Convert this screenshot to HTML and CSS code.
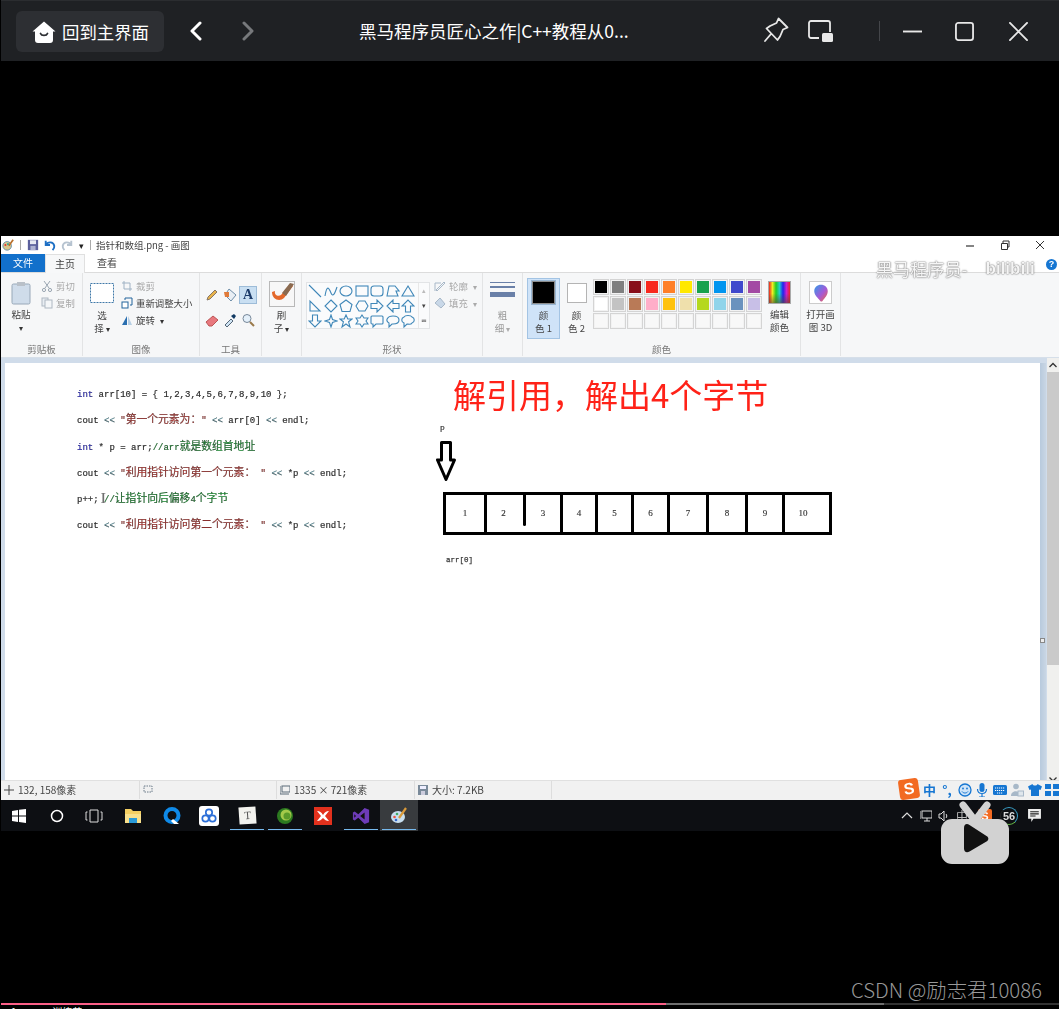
FILE: index.html
```html
<!DOCTYPE html>
<html lang="zh-CN">
<head>
<meta charset="utf-8">
<title>黑马程序员匠心之作|C++教程从0到1</title>
<link rel="stylesheet" href="styles.css">
</head>
<body>
<div class="player">
  <header class="topbar">
    <div class="top-left">
      <button class="home-btn">
        <svg class="ico-home" viewBox="0 0 24 24"><path d="M12 1.500 23.500 11.500H21V20a3 3 0 0 1-3 3H6a3 3 0 0 1-3-3v-8.500H.5z" fill="#fff"/><path d="M8.500 13.500c1 2.600 6 2.600 7 0" fill="none" stroke="#2d2f33" stroke-width="1.800" stroke-linecap="round"/></svg>
        <span>回到主界面</span>
      </button>
      <svg class="ico-chev" viewBox="0 0 14 20"><path d="M11 2 3 10l8 8" fill="none" stroke="#fff" stroke-width="3" stroke-linecap="round" stroke-linejoin="round"/></svg>
      <svg class="ico-chev dim" viewBox="0 0 14 20"><path d="m3 2 8 8-8 8" fill="none" stroke="#77797c" stroke-width="3" stroke-linecap="round" stroke-linejoin="round"/></svg>
    </div>
    <div class="video-title">黑马程序员匠心之作|C++教程从0...</div>
    <div class="top-right">
      <svg class="ico-pin" viewBox="0 0 26 26"><path d="M15.500 1.500 24.500 10.500 20 12.500 17 19.500 14.500 23 3.500 11.500 7 9 13.500 6zM8 17l-6 7" fill="none" stroke="#e8e8e8" stroke-width="1.800" stroke-linejoin="round" stroke-linecap="round"/></svg>
      <svg class="ico-mini" viewBox="0 0 25 22"><path d="M11 18H3a2 2 0 0 1-2-2V3a2 2 0 0 1 2-2h17a2 2 0 0 1 2 2v9" fill="none" stroke="#e8e8e8" stroke-width="1.800"/><rect x="14" y="13" width="11" height="9" rx="1.500" fill="#e8e8e8"/></svg>
      <i class="top-sep"></i>
      <svg class="ico-win" viewBox="0 0 20 20"><path d="M0 10h20" stroke="#e8e8e8" stroke-width="2"/></svg>
      <svg class="ico-win" viewBox="0 0 20 20"><rect x="1" y="1" width="18" height="18" rx="2.500" fill="none" stroke="#e8e8e8" stroke-width="1.900"/></svg>
      <svg class="ico-win" viewBox="0 0 20 20"><path d="m1 1 18 18M19 1 1 19" stroke="#e8e8e8" stroke-width="2" stroke-linecap="round"/></svg>
    </div>
  </header>

  <main class="stage">
    <section class="screen">
      <div class="qat">
        <svg class="q-ico" viewBox="0 0 14 14"><circle cx="6" cy="8" r="5" fill="#d9c58a" stroke="#5a8bb0"/><circle cx="4" cy="7" r="1.200" fill="#d33"/><circle cx="7" cy="6" r="1.200" fill="#3a9"/><path d="m8 8 5-7" stroke="#b86f2a" stroke-width="2"/></svg>
        <i class="q-sep"></i>
        <svg class="q-ico" viewBox="0 0 14 14"><rect x="1" y="1" width="12" height="12" fill="#5b5f9c"/><rect x="3.500" y="1.500" width="7" height="4.500" fill="#e6e8f2"/><rect x="4" y="8" width="6" height="5" fill="#aeb2d2"/></svg>
        <svg class="q-ico" viewBox="0 0 14 14"><path d="M2 2v5h5M2.500 7C4 3 11 2.500 12 8c.3 2-.5 3.500-2 5" fill="none" stroke="#1d6fc4" stroke-width="2.200"/></svg>
        <svg class="q-ico" viewBox="0 0 14 14"><path d="M12 2v5H7M11.500 7C10 3 3 2.500 2 8c-.3 2 .5 3.500 2 5" fill="none" stroke="#b6c3d0" stroke-width="2.200"/></svg>
        <span class="q-drop">▾</span>
        <i class="q-sep"></i>
        <span class="q-title">指针和数组.png - 画图</span>
        <div class="w-ctrl">
          <svg class="w-ico" viewBox="0 0 10 10"><path d="M1 6h8" stroke="#333" stroke-width="1.200"/></svg>
          <svg class="w-ico" viewBox="0 0 10 10"><path d="M1.500 3.500h6v6h-6zM3 3.500V1h6v6H7.500" fill="none" stroke="#333"/></svg>
          <svg class="w-ico" viewBox="0 0 10 10"><path d="m1 1 8 8M9 1 1 9" stroke="#333"/></svg>
        </div>
      </div>

      <nav class="tabs">
        <span class="tab file">文件</span>
        <span class="tab active">主页</span>
        <span class="tab">查看</span>
      </nav>

      <div class="ribbon">
        <div class="group g-clip">
          <div class="g-body">
            <div class="big-col paste">
              <svg class="big-ico" viewBox="0 0 20 24"><rect x="1" y="3" width="18" height="20" rx="1.500" fill="#cfdcea" stroke="#98a8b8"/><rect x="6" y="1" width="8" height="4" fill="#b9c0c8"/></svg>
              <span>粘贴</span>
              <span class="caret">▾</span>
            </div>
            <div class="small-col">
              <div class="s-row off"><svg class="s-ico" viewBox="0 0 12 12"><path d="m3 1 5 7M9 1 4 8" stroke="#9aa6b2"/><circle cx="3" cy="10" r="1.600" fill="none" stroke="#9aa6b2"/><circle cx="9" cy="10" r="1.600" fill="none" stroke="#9aa6b2"/></svg>剪切</div>
              <div class="s-row off"><svg class="s-ico" viewBox="0 0 12 12"><rect x="1" y="1" width="6" height="8" fill="#e8edf2" stroke="#aeb8c2"/><rect x="4" y="3" width="7" height="8" fill="#f4f6f8" stroke="#aeb8c2"/></svg>复制</div>
            </div>
          </div>
          <div class="g-label">剪贴板</div>
        </div>

        <div class="group g-image">
          <div class="g-body">
            <div class="big-col select">
              <svg class="sel-ico" viewBox="0 0 24 20"><rect x=".5" y=".5" width="23" height="19" fill="#fff" stroke="#3f78a8" stroke-dasharray="2 1"/></svg>
              <span class="t-gap">选</span>
              <span>择 <b class="caret">▾</b></span>
            </div>
            <div class="small-col">
              <div class="s-row off"><svg class="s-ico" viewBox="0 0 12 12"><path d="M3 1v8h8M1 3h8v8" fill="none" stroke="#9fb2c4"/></svg>裁剪</div>
              <div class="s-row"><svg class="s-ico" viewBox="0 0 12 12"><rect x="1" y="5" width="6" height="6" fill="#fff" stroke="#23649c"/><path d="M4 3V1h7v7H9" fill="none" stroke="#23649c"/></svg>重新调整大小</div>
              <div class="s-row"><svg class="s-ico" viewBox="0 0 12 12"><path d="M6 2v9H1z" fill="#2a6fb0"/><path d="M7 2v9h4z" fill="#b7cfe4"/></svg>旋转 <b class="caret">▾</b></div>
            </div>
          </div>
          <div class="g-label">图像</div>
        </div>

        <div class="group g-tools">
          <div class="g-body">
            <div class="tool-grid">
              <span class="tool"><svg viewBox="0 0 14 14"><path d="m2 12 1-3 7-7 2 2-7 7z" fill="#e8b34a" stroke="#876"/></svg></span>
              <span class="tool"><svg viewBox="0 0 14 14"><path d="m6 1 7 6-5 6-6-6z" fill="#e8eef4" stroke="#6f8ea8"/><path d="M1 4h5v5H2z" fill="#e07a3a"/></svg></span>
              <span class="tool on"><span class="letter-a">A</span></span>
              <span class="tool"><svg viewBox="0 0 14 14"><path d="m1 9 7-6 5 4-6 6H4z" fill="#e8787e" stroke="#b55"/></svg></span>
              <span class="tool"><svg viewBox="0 0 14 14"><path d="m2 12 6-6 2 2-6 6z" fill="#cfe4f4" stroke="#567"/><path d="m8 3 3-2 2 2-2 3z" fill="#123a63"/></svg></span>
              <span class="tool"><svg viewBox="0 0 14 14"><circle cx="6" cy="5.500" r="4" fill="#e4f0fa" stroke="#789"/><path d="m9 9 4 4" stroke="#9a7a4a" stroke-width="2"/></svg></span>
            </div>
          </div>
          <div class="g-label">工具</div>
        </div>

        <div class="group g-brush">
          <div class="g-body">
            <div class="big-col brush">
              <svg class="big-ico b2" viewBox="0 0 26 26"><rect x=".5" y=".5" width="25" height="25" fill="#f7f7f7" stroke="#b8b8b8"/><path d="M3 11c0 8 8 10 12 6l9-12-3-2-9 11c-3 2-7 0-6-4z" fill="#e4682a"/><path d="m17 15 8-12-4-1-8 10z" fill="#8a6a50"/></svg>
              <span>刷</span>
              <span>子 <b class="caret">▾</b></span>
            </div>
          </div>
        </div>

        <div class="group g-shapes">
          <div class="g-body">
            <div class="gallery">
              <div class="shape-grid">
                <svg viewBox="0 0 14 14"><path d="m1 1 12 12"/></svg>
                <svg viewBox="0 0 14 14"><path d="M1 12c2-12 4-8 6-3s4 0 6-6"/></svg>
                <svg viewBox="0 0 14 14"><ellipse cx="7" cy="7" rx="6" ry="5"/></svg>
                <svg viewBox="0 0 14 14"><rect x="1" y="2" width="12" height="10"/></svg>
                <svg viewBox="0 0 14 14"><rect x="1" y="2" width="12" height="10" rx="3"/></svg>
                <svg viewBox="0 0 14 14"><path d="M1 12 3 2h6l4 5h-3l2 5z"/></svg>
                <svg viewBox="0 0 14 14"><path d="M7 2 13 12H1z"/></svg>
                <svg viewBox="0 0 14 14"><path d="M2 2v10h10z"/></svg>
                <svg viewBox="0 0 14 14"><path d="m7 1 6 6-6 6-6-6z"/></svg>
                <svg viewBox="0 0 14 14"><path d="m7 1 6 4.500-2 7H3l-2-7z"/></svg>
                <svg viewBox="0 0 14 14"><path d="M4 2h6l3 5-3 5H4L1 7z"/></svg>
                <svg viewBox="0 0 14 14"><path d="M1 4.500h6V1l6 6-6 6V9.500H1z"/></svg>
                <svg viewBox="0 0 14 14"><path d="M13 4.500H7V1L1 7l6 6V9.500h6z"/></svg>
                <svg viewBox="0 0 14 14"><path d="M4.500 13V7H1l6-6 6 6H9.500v6z"/></svg>
                <svg viewBox="0 0 14 14"><path d="M4.500 1v6H1l6 6 6-6H9.500V1z"/></svg>
                <svg viewBox="0 0 14 14"><path d="m7 1 1.500 4.500L13 7 8.500 8.500 7 13 5.500 8.500 1 7l4.500-1.500z"/></svg>
                <svg viewBox="0 0 14 14"><path d="m7 1 1.800 4H13l-3.400 2.800L11 13 7 10 3 13l1.400-5.200L1 5h4.200z"/></svg>
                <svg viewBox="0 0 14 14"><path d="M7 1 9 4h4l-2 3 2 3H9l-2 3-2-3H1l2-3-2-3h4z"/></svg>
                <svg viewBox="0 0 14 14"><path d="M2 2h10a1 1 0 0 1 1 1v6a1 1 0 0 1-1 1H6l-3 3v-3H2a1 1 0 0 1-1-1V3a1 1 0 0 1 1-1z"/></svg>
                <svg viewBox="0 0 14 14"><path d="M7 2c8 0 8 8 0 8H6l-3 3v-4C-1 7 1 2 7 2z"/></svg>
                <svg viewBox="0 0 14 14"><path d="M3 3c1-2 7-2 8 0 3 1 3 5 0 6-1 2-4 1-5 1l-3 3v-4C0 8 0 4 3 3z"/></svg>
              </div>
              <div class="gal-scroll"><span>▴</span><span class="dark">▾</span><span class="dark">≂</span></div>
            </div>
            <div class="small-col tight">
              <div class="s-row off"><svg class="s-ico" viewBox="0 0 12 12"><path d="M1 11V3h6M2 10l8-8 1 1-8 8z" fill="none" stroke="#a8b8c8"/></svg>轮廓 <b class="caret pale">▾</b></div>
              <div class="s-row off"><svg class="s-ico" viewBox="0 0 12 12"><path d="m6 1 5 6-4 4-6-5z" fill="#c9d8e8" stroke="#a8b8c8"/></svg>填充 <b class="caret pale">▾</b></div>
            </div>
          </div>
          <div class="g-label">形状</div>
        </div>

        <div class="group g-size">
          <div class="g-body">
            <div class="big-col off">
              <div class="lines"><i class="l1"></i><i class="l2"></i><i class="l3"></i></div>
              <span>粗</span>
              <span>细 <b class="caret pale">▾</b></span>
            </div>
          </div>
        </div>

        <div class="group g-colors">
          <div class="g-body">
            <div class="color-btn on">
              <i class="c-box black"></i>
              <span>颜</span>
              <span>色 1</span>
            </div>
            <div class="color-btn">
              <i class="c-box white"></i>
              <span>颜</span>
              <span>色 2</span>
            </div>
            <div class="palette">
              <i class="sw c01"></i><i class="sw c02"></i><i class="sw c03"></i><i class="sw c04"></i><i class="sw c05"></i><i class="sw c06"></i><i class="sw c07"></i><i class="sw c08"></i><i class="sw c09"></i><i class="sw c10"></i>
              <i class="sw c11"></i><i class="sw c12"></i><i class="sw c13"></i><i class="sw c14"></i><i class="sw c15"></i><i class="sw c16"></i><i class="sw c17"></i><i class="sw c18"></i><i class="sw c19"></i><i class="sw c20"></i>
              <i class="sw"></i><i class="sw"></i><i class="sw"></i><i class="sw"></i><i class="sw"></i><i class="sw"></i><i class="sw"></i><i class="sw"></i><i class="sw"></i><i class="sw"></i>
            </div>
            <div class="big-col edit">
              <i class="rainbow"></i>
              <span>编辑</span>
              <span>颜色</span>
            </div>
          </div>
          <div class="g-label">颜色</div>
        </div>

        <div class="group g-3d">
          <div class="g-body">
            <div class="big-col p3d">
              <span class="p3d-box"><svg viewBox="0 0 20 24"><defs><linearGradient id="p3" x1="0" y1="0" x2="1" y2="1"><stop offset="0" stop-color="#2f9be8"/><stop offset=".55" stop-color="#a55ad8"/><stop offset="1" stop-color="#f4683a"/></linearGradient></defs><path d="M10 1c5 0 9 3.500 9 8.500 0 5-4 9-7 13-1 1-2 1-3 0C6 18.500 1 14.500 1 9.500 1 4.500 5 1 10 1z" fill="url(#p3)"/></svg></span>
              <span>打开画</span>
              <span>图 3D</span>
            </div>
          </div>
        </div>

        <div class="mark">
          <span class="mark-zh">黑马程序员-</span>
          <span class="mark-bili">bilibili</span>
        </div>
        <span class="help">?</span>
      </div>

      <div class="work">
        <div class="page">
          <div class="code">
            <p class="ln"><span class="kw">int</span> arr[10] = { 1,2,3,4,5,6,7,8,9,10 };</p>
            <p class="ln">cout <span class="op">&lt;&lt;</span> <span class="str">"<span class="zh">第一个元素为：</span>"</span> <span class="op">&lt;&lt;</span> arr[0] <span class="op">&lt;&lt;</span> endl;</p>
            <p class="ln"><span class="kw">int</span> * p = arr;<span class="cm">//arr<span class="zh">就是数组首地址</span></span></p>
            <p class="ln">cout <span class="op">&lt;&lt;</span> <span class="str">"<span class="zh">利用指针访问第一个元素：</span> "</span> <span class="op">&lt;&lt;</span> *p <span class="op">&lt;&lt;</span> endl;</p>
            <p class="ln">p++;<span class="ibeam">I</span> <span class="cm">//<span class="zh">让指针向后偏移</span>4<span class="zh">个字节</span></span></p>
            <p class="ln">cout <span class="op">&lt;&lt;</span> <span class="str">"<span class="zh">利用指针访问第二个元素：</span> "</span> <span class="op">&lt;&lt;</span> *p <span class="op">&lt;&lt;</span> endl;</p>
          </div>
          <div class="diagram">
            <h1 class="headline">解引用，解出4个字节</h1>
            <div class="p-label">p</div>
            <svg class="arrow" viewBox="0 0 20 40"><path d="M5.500 1.500h9V19h4L10 38.500 1.500 19h4z" fill="#fff" stroke="#000" stroke-width="3" stroke-linejoin="round"/></svg>
            <div class="array">
              <span class="cell">1</span><span class="cell short">2</span><span class="cell">3</span><span class="cell">4</span><span class="cell">5</span><span class="cell">6</span><span class="cell">7</span><span class="cell">8</span><span class="cell">9</span><span class="cell last">10</span>
            </div>
            <div class="arr-label">arr[0]</div>
          </div>
        </div>
        <i class="page-gutter"><b class="grip"></b></i>
        <div class="vscroll">
          <svg class="sb-arrow" viewBox="0 0 10 14"><path d="m1.500 9 3.500-3.500L8.500 9" fill="none" stroke="#333" stroke-width="1.300"/></svg>
          <div class="sb-track"><i class="sb-thumb"></i></div>
          <svg class="sb-arrow" viewBox="0 0 10 14"><path d="m1.500 5.500 3.500 3.500 3.500-3.500" fill="none" stroke="#333" stroke-width="1.300"/></svg>
        </div>
      </div>

      <footer class="status">
        <span class="st st1"><svg class="st-ico" viewBox="0 0 10 10"><path d="M5 0v10M0 5h10" stroke="#444"/></svg>132, 158像素</span>
        <span class="st st2"><svg class="st-ico" viewBox="0 0 10 10"><rect x="1" y="1" width="8" height="6" fill="none" stroke="#6a7a88" stroke-dasharray="1.500 1"/></svg></span>
        <span class="st st3"><svg class="st-ico" viewBox="0 0 10 10"><rect x="2" y="1" width="8" height="6" fill="none" stroke="#5a6a78"/><path d="M0 1v8h9" fill="none" stroke="#5a6a78"/></svg>1335 × 721像素</span>
        <span class="st st4"><svg class="st-ico" viewBox="0 0 10 10"><rect x="0" y="0" width="10" height="10" fill="#7a8a9a"/><rect x="2" y="1" width="6" height="3" fill="#eef"/><rect x="3" y="6" width="4" height="4" fill="#ccd"/></svg>大小: 7.2KB</span>
        <div class="ime">
          <span class="ime-s">S</span>
          <span class="ime-t">中</span>
          <span class="ime-t">°,</span>
          <svg class="ime-i" viewBox="0 0 14 14"><circle cx="7" cy="7" r="6" fill="#cfe4f8" stroke="#1676d2" stroke-width="1.300"/><circle cx="5" cy="5.500" r=".9" fill="#1676d2"/><circle cx="9" cy="5.500" r=".9" fill="#1676d2"/><path d="M4 8.500c1.500 2 4.500 2 6 0" fill="none" stroke="#1676d2"/></svg>
          <svg class="ime-i" viewBox="0 0 14 14"><rect x="4.500" y="0" width="5" height="9" rx="2.500" fill="#1676d2"/><path d="M2.500 6c0 6 9 6 9 0M7 11v3M4 14h6" fill="none" stroke="#1676d2" stroke-width="1.200"/></svg>
          <svg class="ime-i" viewBox="0 0 14 14"><rect x="0" y="2" width="14" height="10" rx="1.500" fill="#1676d2"/><path d="M2 5h10M2 7.500h10M4 10h6" stroke="#fff" stroke-dasharray="1.200 .8"/></svg>
          <svg class="ime-i" viewBox="0 0 14 14"><circle cx="6" cy="3.500" r="2.800" fill="#a8b8c8"/><path d="M1 13c0-6 9-6 9-1v1z" fill="#a8b8c8"/><rect x="8" y="8" width="5.500" height="5" fill="#dfe6ec" stroke="#a8b8c8"/></svg>
          <svg class="ime-i" viewBox="0 0 14 14"><path d="M4.500 1 0 3.500 1.500 7 3 6.500V13h8V6.500l1.500.5L14 3.500 9.500 1C9 3 5 3 4.500 1z" fill="#1676d2"/></svg>
          <svg class="ime-i" viewBox="0 0 14 14"><path d="M0 1h6v5H0zM8 1h6v5H8zM0 8h6v5H0zM8 8h6v5H8z" fill="#1676d2"/></svg>
        </div>
      </footer>

      <div class="taskbar">
        <svg class="tk tk-win" viewBox="0 0 14 14"><path d="M0 2 6 1v5.500H0zM7 .8 14 0v6.500H7zM0 7.500h6V13l-6-1zM7 7.500h7V14l-7-1z" fill="#fff"/></svg>
        <svg class="tk tk-cortana" viewBox="0 0 14 14"><circle cx="7" cy="7" r="5.500" fill="none" stroke="#fff" stroke-width="1.500"/></svg>
        <svg class="tk tk-view" viewBox="0 0 18 14"><path d="M5 1h8v12H5zM2.500 3H1v8h1.500M15.500 3H17v8h-1.500" fill="none" stroke="#ddd"/></svg>
        <svg class="tk tk-app" viewBox="0 0 18 16"><path d="M1 1h6l2 2h8v12H1z" fill="#f4cf62"/><rect x="1" y="6" width="16" height="9" fill="#f8e08c"/><rect x="5" y="10" width="8" height="5" fill="#2a9ad8"/></svg>
        <svg class="tk tk-app" viewBox="0 0 18 18"><circle cx="9" cy="8.500" r="6.500" fill="none" stroke="#0f8ae8" stroke-width="4"/><path d="m10 12 6 5h-5l-3-3z" fill="#fff"/></svg>
        <svg class="tk tk-app tall" viewBox="0 0 20 20"><rect width="20" height="20" rx="3" fill="#fff"/><g fill="none" stroke="#2c6fd8" stroke-width="1.700"><circle cx="6.500" cy="12.500" r="3.200"/><circle cx="13.500" cy="12.500" r="3.200"/><circle cx="10" cy="6.500" r="3.200"/></g></svg>
        <span class="tk-cell run"><span class="tk-t">T</span></span>
        <span class="tk-cell run"><svg class="tk-in" viewBox="0 0 18 18"><circle cx="9" cy="9" r="8" fill="#2c7a20"/><circle cx="10" cy="8" r="5.500" fill="#a4c94a"/><circle cx="11" cy="9" r="3.500" fill="#5b9a2a"/></svg></span>
        <span class="tk-cell"><svg class="tk-in" viewBox="0 0 18 18"><rect width="18" height="18" fill="#e2311d"/><path d="M3 4c3 0 4 1 6 4 2-3 3-4 6-4l-4 5 4 5c-3 0-4-1-6-3-2 2-3 3-6 3l4-5z" fill="#fff"/></svg></span>
        <span class="tk-cell run"><svg class="tk-in" viewBox="0 0 20 20"><path d="M14 1 19 3v14l-5 2-7-7-4 3-2-1V6l2-1 4 3z" fill="#6d3bb8"/><path d="M14 6v8l-5-4zM2.500 8v4l2-2z" fill="#121212"/></svg></span>
        <span class="tk-cell run cur"><svg class="tk-in" viewBox="0 0 18 18"><ellipse cx="8" cy="10" rx="7" ry="6" fill="#c8dff0"/><circle cx="4.500" cy="10" r="1.300" fill="#e54"/><circle cx="7" cy="7" r="1.300" fill="#4a6"/><circle cx="6" cy="13" r="1.300" fill="#36c"/><path d="m9 11 7-10" stroke="#d99a3a" stroke-width="2.200"/></svg></span>
        <div class="tray">
          <svg class="tr t-caret" viewBox="0 0 12 12"><path d="m1 8 5-5 5 5" fill="none" stroke="#ddd" stroke-width="1.200"/></svg>
          <svg class="tr t-mon" viewBox="0 0 12 12"><rect x="2" y="1" width="10" height="7" fill="none" stroke="#ddd"/><path d="M7 8v3M4 11h6M0 1v8" stroke="#ddd"/></svg>
          <svg class="tr t-vol" viewBox="0 0 12 12"><path d="M1 4h2l3-3v10L3 8H1z" fill="none" stroke="#ddd"/><path d="M8 4c1 1 1 3 0 4" fill="none" stroke="#ddd"/></svg>
          <span class="tr-t">中</span>
          <span class="tr-s">S</span>
          <span class="tr-ring">56</span>
          <svg class="tr notif" viewBox="0 0 14 14"><path d="M1 1h12v9H6l-2 3v-3H1z" fill="#eee"/><path d="M3 3.500h8M3 5.500h8M3 7.500h5" stroke="#222"/></svg>
        </div>
      </div>
    </section>

    <svg class="tv-play" viewBox="0 0 72 66"><path d="m24 5 10 13M48 5 38 18" stroke="#d2d2d2" stroke-width="7" stroke-linecap="round" fill="none"/><rect x="2" y="19" width="68" height="45" rx="11" fill="#d2d2d2"/><path d="M25 28c0-3.500 2.500-5 5.500-3l17 11c2.500 1.500 2.500 4 0 5.500l-17 10c-3 1.800-5.500.3-5.500-3z" fill="#111"/></svg>
    <div class="csdn">CSDN @励志君10086</div>
    <div class="progress"><i class="p-play"></i><i class="p-buf"></i><i class="p-rest"></i></div>
    <div class="next-line"><span>1.</span><span>训练营</span></div>
  </main>
</div>
</body>
</html>
```
FILE: styles.css
```css
* { box-sizing: border-box; }
html, body { margin: 0; padding: 0; background: #000; }
body { width: 1059px; height: 1009px; overflow: hidden; font-family: "Noto Sans CJK SC", "Noto Sans", sans-serif; }
svg { display: block; flex: none; }
i { display: block; font-style: normal; }
p, h1 { margin: 0; }

.player { height: 1009px; display: flex; flex-direction: column; border-left: 1px solid #000; }

/* top bar */
.topbar { height: 61px; flex: none; background: #1f2124; border-top: 1px solid #2b2d30; display: flex; align-items: center; position: relative; }
.top-left { display: flex; align-items: center; padding-left: 15px; width: 358px; }
.home-btn { width: 148px; height: 41px; margin-top: 1px; border: 0; border-radius: 6px; background: #2d2f33; color: #fff; font: 17.400px/41px "Noto Sans CJK SC", sans-serif; display: flex; align-items: center; padding: 0 0 0 16px; gap: 6px; }
.ico-home { width: 24px; height: 24px; }
.ico-chev { width: 14px; height: 20px; margin-left: 25px; }
.ico-chev.dim { margin-left: 38px; }
.video-title { width: 371px; color: #fff; font-size: 17.500px; line-height: 24px; white-space: nowrap; }
.top-right { display: flex; align-items: center; height: 100%; }
.ico-pin { width: 26px; height: 26px; margin-left: 33px; margin-top: -2px; }
.ico-mini { width: 25px; height: 22px; margin-left: 19px; }
.top-sep { width: 1px; height: 20px; background: #44464a; margin-left: 46px; }
.ico-win { width: 19px; height: 19px; margin-left: 23px; }
.ico-win + .ico-win { margin-left: 33px; }
.ico-win + .ico-win + .ico-win { margin-left: 35px; }

/* stage */
.stage { flex: 1; position: relative; padding-top: 175px; background: #000; }

/* paint window */
.screen { height: 595px; display: flex; flex-direction: column; color: #444; font-size: 9.500px; filter: blur(.5px); background: #fff; }
.qat { height: 18px; display: flex; align-items: center; background: #fff; flex: none; }
.q-ico { width: 12px; height: 12px; margin-left: 5px; }
.q-ico:first-child { margin-left: 1px; }
.q-sep { width: 1px; height: 10px; background: #aaa; margin-left: 6px; margin-right: 1px; }
.q-drop { margin-left: 6px; font-size: 9px; color: #222; }
.q-title { margin-left: 4px; color: #444; font-size: 9.500px; }
.w-ctrl { margin-left: auto; display: flex; gap: 25px; padding-right: 14px; }
.w-ico { width: 10px; height: 10px; }

.tabs { height: 18px; display: flex; flex: none; background: #fff; }
.tab { width: 40px; text-align: center; line-height: 18px; color: #444; font-size: 10px; }
.tab.file { width: 44px; background: #1270cb; color: #fff; }
.tab.active { border: 1px solid #e0e0e0; border-bottom: 0; height: 19px; background: #f7f8f9; position: relative; z-index: 1; }
.tab + .tab + .tab { margin-left: 2px; }

.ribbon { height: 85px; flex: none; display: flex; background: #f6f7f8; border-top: 1px solid #dcdcdc; position: relative; }
.group { border-right: 1px solid #e3e4e5; display: flex; flex-direction: column; margin-bottom: 1px; }
.g-body { height: 70px; display: flex; padding-top: 8px; }
.g-label { text-align: center; color: #777; line-height: 14px; }
.g-clip { width: 82px; }
.g-image { width: 117px; }
.g-tools { width: 62px; }
.g-brush { width: 40px; }
.g-shapes { width: 181px; }
.g-size { width: 40px; }
.g-colors { width: 278px; }
.g-3d { width: 40px; }

.big-col { display: flex; flex-direction: column; align-items: center; line-height: 13px; }
.big-col.off { color: #999; width: 100%; }
.big-ico { width: 20px; height: 24px; margin-bottom: 3px; }
.big-ico.b2 { width: 26px; height: 26px; margin-bottom: 2px; }
.paste { width: 40px; }
.caret { font-weight: 400; font-size: 8px; color: #333; }
.caret.pale { color: #aaa; }
.small-col { display: flex; flex-direction: column; gap: 1px; margin-top: -3px; font-size: 9.400px; }
.small-col.tight { margin-left: 4px; }
.s-row { display: flex; align-items: center; gap: 3px; height: 16px; white-space: pre; color: #444; }
.s-row.off { color: #a8a8a8; }
.s-ico { width: 12px; height: 12px; }

.select { width: 38px; }
.sel-ico { width: 24px; height: 20px; margin: 2px 0 6px; }
.t-gap { display: block; }

.tool-grid { display: grid; grid-template-columns: repeat(3, 18px); grid-auto-rows: 25px; padding: 5px 0 0 3px; }
.tool { width: 18px; height: 18px; padding: 2px; display: block; }
.tool svg { width: 14px; height: 14px; }
.tool.on { background: #c9dff2; border: 1px solid #9dbcd8; padding: 0; text-align: center; }
.letter-a { font: 700 14px/16px "Liberation Serif", serif; color: #1d3c6a; display: block; }
.brush { width: 100%; }

.gallery { width: 124px; height: 47px; margin: 1px 0 0 4px; border: 1px solid #e2e4e6; background: #fafbfc; display: flex; }
.shape-grid { width: 111px; display: grid; grid-template-columns: repeat(7, 15.500px); grid-auto-rows: 15px; }
.shape-grid svg { width: 14px; height: 14px; fill: none; stroke: #3f87b8; stroke-width: 1.100; margin: .5px 1px; }
.gal-scroll { flex: 1; border-left: 1px solid #e8e8e8; display: flex; flex-direction: column; align-items: center; font-size: 7px; line-height: 15px; color: #bbb; }
.gal-scroll .dark { color: #444; }

.lines { width: 25px; height: 21px; margin: 1px 0 6px; display: flex; flex-direction: column; gap: 3px; }
.lines .l1 { height: 1px; background: #6a80a8; }
.lines .l2 { height: 2px; background: #6a80a8; }
.lines .l3 { height: 5px; margin-top: 1px; background: #6a80a8; }

.color-btn { width: 33px; height: 61px; margin: -3px 0 0 4px; padding-top: 3px; display: flex; flex-direction: column; align-items: center; line-height: 13px; color: #444; }
.color-btn.on { width: 33px; background: #cfe3f8; border: 1px solid #a3c4e4; padding-top: 2px; }
.color-btn + .color-btn { margin-left: 0; }
.c-box { width: 23px; height: 23px; border: 1px solid #8c8c8c; margin-bottom: 5px; }
.c-box.black { background: #000; outline: 1px solid #99b6d2; }
.c-box.white { width: 20px; height: 20px; background: #fff; margin: 2px 0 6px; border-color: #b4b4b4; }

.palette { width: 171px; display: grid; grid-template-columns: repeat(10, 17px); grid-auto-rows: 17px; margin-top: -2px; height: 51px; }
.sw { width: 16px; height: 16px; border: 1px solid #d4d4d4; background: #f8f8f8; box-shadow: inset 0 0 0 1px #f2f2f2; }
.c01 { background: #000; } .c02 { background: #7f7f7f; } .c03 { background: #880f1a; } .c04 { background: #f8281e; } .c05 { background: #ff7f27; }
.c06 { background: #ffe800; } .c07 { background: #17a14c; } .c08 { background: #0095ef; } .c09 { background: #3f48cc; } .c10 { background: #a349a4; }
.c11 { background: #fff; } .c12 { background: #c3c3c3; } .c13 { background: #b97a57; } .c14 { background: #ffaec9; } .c15 { background: #ffc20e; }
.c16 { background: #efe0ac; } .c17 { background: #b5d81d; } .c18 { background: #90d4ea; } .c19 { background: #6a92be; } .c20 { background: #c8bfe7; }

.edit { width: 31px; }
.rainbow { width: 23px; height: 23px; border: 1px solid #aaa; margin-bottom: 4px; background: linear-gradient(to bottom, rgba(255,255,255,0) 55%, rgba(90,70,50,.6)), linear-gradient(to right, #e22, #ee2, #2c2, #2cc, #22e, #c2c, #e22); }
.p3d { width: 100%; white-space: nowrap; }
.p3d-box { width: 23px; height: 23px; border: 1px solid #ccc; background: #fff; margin-bottom: 4px; padding: 2px 3px; display: block; }
.p3d-box svg { width: 16px; height: 18px; }

.mark { position: absolute; top: -13px; left: 875px; display: flex; align-items: center; gap: 18px; height: 18px; color: rgba(255,255,255,.92); text-shadow: 0 0 1.500px #777, 0 0 1.500px #777; }
.mark-zh { font-size: 17px; line-height: 18px; white-space: nowrap; letter-spacing: .1px; }
.mark-bili { font: 700 17px/18px "Liberation Sans", sans-serif; }
.help { position: absolute; top: -14px; right: 2px; width: 11px; height: 11px; border-radius: 50%; background: #1676d2; color: #fff; font: 700 9px/11px "Liberation Sans", sans-serif; text-align: center; }

/* canvas */
.work { height: 423px; flex: none; display: flex; background: #d0dcea; padding-top: 5px; border-top: 1px solid #d6dfe9; }
.page { width: 1036px; margin-left: 4px; background: #fff; display: flex; font-size: 9px; color: #333; height: 100%; }
.code { width: 431px; padding: 19px 0 0 72px; font-family: "Liberation Mono", monospace; font-size: 9px; }
.ln { height: 26.300px; line-height: 26px; white-space: pre; position: relative; color: #2a2a2a; -webkit-text-stroke: .2px #333; }
.zh { font-family: "Noto Sans CJK SC", sans-serif; font-size: 10.800px; line-height: 0; }
.kw { color: #2a2ad0; }
.op { color: #5f9dab; }
.str { color: #a8302c; }
.cm { color: #16812c; }
.ibeam { position: absolute; left: 24px; top: -1px; font: 14px/26px "Liberation Serif", serif; color: #777; }

.diagram { display: flex; flex-direction: column; align-items: flex-start; }
.headline { font-size: 33px; font-weight: 400; line-height: 36px; color: #ff2218; margin: 13px 0 0 17px; white-space: nowrap; }
.p-label { font: 8px/10px "Liberation Mono", monospace; margin: 11px 0 0 4px; height: 10px; -webkit-text-stroke: .2px #333; }
.arrow { width: 20px; height: 40px; margin-top: 8px; }
.array { width: 389px; height: 43px; margin: 11px 0 0 7px; border: 3.500px solid #000; display: grid; grid-template-columns: 41px 39px 37px 35px 36px 36px 39px 39px 37px 1fr; background: #fff; }
.cell { border-right: 3px solid #000; font: 9px/36px "Liberation Serif", serif; color: #333; text-align: center; position: relative; -webkit-text-stroke: .15px #333; }
.cell.short { border-right: 0; padding-right: 6px; }
.cell.short::after { content: ""; position: absolute; right: 0; top: 0; width: 3px; height: 31px; background: #000; border-radius: 0 0 2px 2px; }
.cell.last { border-right: 0; padding-right: 8px; }
.arr-label { font: 7.500px/12px "Liberation Mono", monospace; margin: 19px 0 0 10px; color: #444; -webkit-text-stroke: .25px #333; }

.page-gutter { width: 6px; background: linear-gradient(to right, #b8cadd, #c9d6e4); position: relative; }
.grip { position: absolute; left: 0; top: 275px; width: 5px; height: 5px; border: 1px solid #888; background: #eee; }
.vscroll { width: 12px; margin-left: 1px; background: #f0f0ee; display: flex; flex-direction: column; align-items: center; margin-top: -5px; height: 428px; }
.sb-arrow { width: 10px; height: 14px; }
.sb-track { flex: 1; width: 100%; }
.sb-thumb { height: 293px; background: #cacaca; }

/* status */
.status { height: 20px; flex: none; display: flex; background: #f1f1f1; border-top: 1px solid #e0e0e0; color: #444; font-size: 10px; line-height: 18px; position: relative; }
.st { display: flex; align-items: center; gap: 4px; padding-left: 3px; height: 18px; border-right: 1px solid #ddd; white-space: pre; }
.st1 { width: 139px; }
.st2 { width: 137px; }
.st3 { width: 138px; }
.st4 { width: 137px; }
.st-ico { width: 10px; height: 10px; }
.ime { margin-left: auto; display: flex; align-items: center; height: 18px; gap: 3.500px; color: #1676d2; }
.ime-s { width: 20px; height: 20px; margin: -3px 0 0 0; background: #f26a22; color: #fff; font: 700 16px/20px "Liberation Sans", sans-serif; text-align: center; border-radius: 3px; transform: rotate(-8deg); }
.ime-t { font-size: 13px; font-weight: 700; width: 14px; text-align: center; }
.ime-i { width: 14px; height: 14px; }

/* taskbar */
.taskbar { height: 31px; flex: none; background: #0d0f13; display: flex; align-items: center; position: relative; }
.tk { height: 14px; }
.tk-win { width: 14px; margin-left: 11px; }
.tk-cortana { width: 14px; margin-left: 24px; }
.tk-view { width: 18px; margin-left: 21px; }
.tk-app { width: 18px; height: 16px; margin-left: 21px; }
.tk-app + .tk-app { height: 18px; }
.tk-app.tall { width: 20px; height: 20px; margin-left: 18px; margin-right: 9px; }
.tk-cell { width: 38px; height: 31px; display: flex; align-items: center; justify-content: center; position: relative; }
.tk-cell.run::after { content: ""; position: absolute; left: 2px; right: 2px; bottom: 1px; height: 1px; background: #76b9ed; }
.tk-cell.cur { background: #383b3e; }
.tk-in { width: 18px; height: 18px; }
.tk-t { width: 17px; height: 17px; background: #f2f2ee; color: #555; font: 11px/17px "Liberation Serif", serif; text-align: center; transform: rotate(-4deg); }
.tray { margin-left: auto; display: flex; align-items: center; padding-right: 17px; color: #ddd; }
.tr { width: 12px; height: 12px; }
.t-mon { margin-left: 7px; }
.t-vol { margin-left: 6px; }
.tr-t { font-size: 12px; width: 18px; margin-left: 3px; text-align: center; color: #bbb; }
.tr-s { width: 14px; height: 14px; background: #f26a22; color: #fff; font: 700 11px/14px "Liberation Sans", sans-serif; text-align: center; border-radius: 2px; margin-left: 7px; }
.tr-ring { width: 18px; height: 18px; margin-left: 8px; border-radius: 50%; border: 1px solid; border-color: #3aa0c8 #3aa0c8 #6abf4a #222; font: 700 11px/16px "Liberation Sans", sans-serif; text-align: center; color: #ddd; white-space: nowrap; }
.tr.notif { width: 15px; height: 15px; margin-left: 9px; }

/* overlays */
.tv-play { position: absolute; left: 938px; top: 739px; width: 72px; height: 66px; }
.csdn { position: absolute; left: 850px; top: 914px; font-size: 20.400px; line-height: 28px; color: #999; white-space: nowrap; font-weight: 300; }
.progress { position: absolute; left: 0; right: 0; top: 942px; height: 2px; display: flex; }
.p-play { width: 665px; background: #fb5f87; }
.p-buf { width: 218px; background: #6f6f6f; }
.p-rest { flex: 1; background: #333; }
.next-line { position: absolute; left: 10px; top: 945px; height: 3px; overflow: hidden; display: flex; gap: 33px; color: #fff; font-size: 10px; line-height: 12px; }
```
